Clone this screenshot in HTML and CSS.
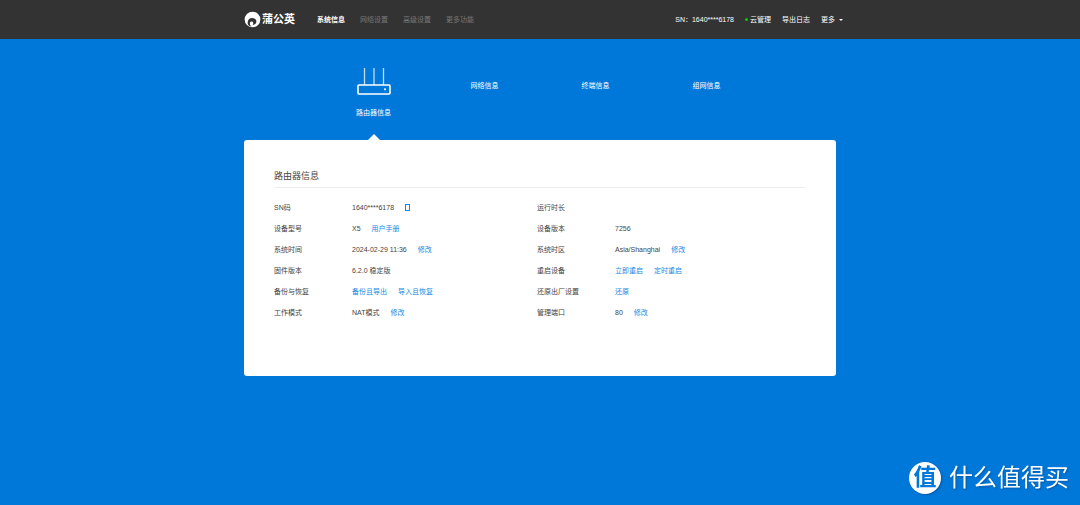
FILE: index.html
```
<!DOCTYPE html>
<html lang="zh-CN">
<head>
<meta charset="utf-8">
<meta name="viewport" content="width=device-width, initial-scale=1">
<title>蒲公英 - 系统信息</title>
<link rel="stylesheet" href="styles.css">
</head>
<body>
<header class="topbar">
  <div class="topbar-inner">
    <a class="brand" href="#">
      <svg class="brand-mark" viewBox="0 0 16 16" aria-hidden="true">
        <circle cx="8" cy="8" r="7.4" fill="#fff"/>
        <path d="M3.6 12.2C2.9 9.2 4.8 6.6 7.6 6.6C10.2 6.6 11.9 8.4 11.6 10.4C11.3 12.3 9.6 13.3 8 13C9 12.2 9 10.8 8 10.2C6.8 9.6 5.5 10.4 5.5 11.8C5.5 13.1 6.2 14 7.2 14.6C5.4 14.7 4 13.7 3.6 12.2Z" fill="#333"/>
      </svg>
      <span>蒲公英</span>
    </a>
    <nav class="main-nav">
      <a class="active" href="#">系统信息</a>
      <a href="#">网络设置</a>
      <a href="#">高级设置</a>
      <a href="#">更多功能</a>
    </nav>
    <div class="tools">
      <span>SN：1640****6178</span>
      <a class="cloud" href="#">云管理</a>
      <a href="#">导出日志</a>
      <button class="more" type="button">更多</button>
    </div>
  </div>
</header>

<main class="page">
  <nav class="tabs">
    <a class="tab current" href="#">
      <svg class="router" viewBox="0 0 34 28" fill="none" stroke="#fff" aria-hidden="true">
        <path d="M7.5 0v17M17 0v17M26.5 0v17" stroke-width="1.3" opacity=".75"/>
        <rect x="1" y="17" width="32" height="9" rx="1" stroke-width="1.6"/>
        <circle cx="28" cy="21.3" r="1" fill="#fff" stroke="none"/>
      </svg>
      <span>路由器信息</span>
    </a>
    <a class="tab" href="#">网络信息</a>
    <a class="tab" href="#">终端信息</a>
    <a class="tab" href="#">组网信息</a>
  </nav>

  <section class="card">
    <h1>路由器信息</h1>
    <div class="columns">
      <dl>
        <div class="row"><dt>SN码</dt><dd>1640****6178 <button class="copy" type="button" aria-label="复制"></button></dd></div>
        <div class="row"><dt>设备型号</dt><dd>X5 <a href="#">用户手册</a></dd></div>
        <div class="row"><dt>系统时间</dt><dd>2024-02-29 11:36 <a href="#">修改</a></dd></div>
        <div class="row"><dt>固件版本</dt><dd>6.2.0 稳定版</dd></div>
        <div class="row"><dt>备份与恢复</dt><dd><a href="#">备份且导出</a><a href="#">导入且恢复</a></dd></div>
        <div class="row"><dt>工作模式</dt><dd>NAT模式 <a href="#">修改</a></dd></div>
      </dl>
      <dl>
        <div class="row"><dt>运行时长</dt><dd></dd></div>
        <div class="row"><dt>设备版本</dt><dd>7256</dd></div>
        <div class="row"><dt>系统时区</dt><dd>Asia/Shanghai <a href="#">修改</a></dd></div>
        <div class="row"><dt>重启设备</dt><dd><a href="#">立即重启</a><a href="#">定时重启</a></dd></div>
        <div class="row"><dt>还原出厂设置</dt><dd><a href="#">还原</a></dd></div>
        <div class="row"><dt>管理端口</dt><dd>80 <a href="#">修改</a></dd></div>
      </dl>
    </div>
  </section>
</main>

<div class="watermark">
  <span class="seal">值</span>
  <span>什么值得买</span>
</div>
</body>
</html>
```

FILE: styles.css
```
* { box-sizing: border-box; }

body {
  margin: 0;
  min-height: 100vh;
  background: #0078d9;
  color: #444;
  font: 7px/21px "Liberation Sans", "Noto Sans CJK SC", sans-serif;
}

a { color: #1488e4; text-decoration: none; }

button {
  padding: 0;
  border: 0;
  background: none;
  color: inherit;
  font: inherit;
  cursor: pointer;
}

.topbar { background: #333; color: #fff; }
.topbar a { color: inherit; }

.topbar-inner {
  display: flex;
  align-items: center;
  max-width: 606px;
  min-height: 39px;
  margin: 0 auto;
  padding-left: 7px;
}

.brand {
  display: flex;
  align-items: center;
  gap: 1px;
  font-size: 11px;
  font-weight: 700;
}
.brand-mark { width: 17px; height: 17px; }

.main-nav { display: flex; gap: 15px; margin-left: 22px; }
.main-nav a { color: #777; }
.main-nav .active { color: #fff; font-weight: 700; }

.tools { display: flex; align-items: center; gap: 11px; margin-left: auto; }
.cloud { display: flex; align-items: center; gap: 2px; }
.cloud::before {
  content: "";
  width: 3px;
  height: 3px;
  border-radius: 50%;
  background: #0c0;
}
.more { display: flex; align-items: center; gap: 4px; }
.more::after {
  content: "";
  border: 2px solid transparent;
  border-top-color: #fff;
  border-bottom-width: 0;
}

.page { max-width: 592px; margin: 0 auto; }

.tabs {
  display: grid;
  grid-template-columns: repeat(4, 1fr);
  min-height: 101px;
  padding: 0 74px;
}
.tab {
  display: flex;
  flex-direction: column;
  align-items: center;
  padding-top: 36px;
  color: #fff;
}
.current { position: relative; padding-top: 29px; gap: 6px; }
.current::after {
  content: "";
  position: absolute;
  bottom: 0;
  border: 6px solid transparent;
  border-bottom-color: #fff;
  border-top-width: 0;
}
.router { width: 34px; height: 28px; }

.card {
  padding: 26px 30px 53px;
  border-radius: 3px;
  background: #fff;
}
.card h1 {
  margin: 0 0 9px;
  border-bottom: 1px solid #eee;
  font-size: 9px;
  font-weight: 400;
}

.columns { display: grid; grid-template-columns: 1fr 1fr; padding-right: 6px; }
.columns dl { margin: 0; }
.row { display: flex; }
.row dt { flex: 0 0 78px; }
.row dd { display: flex; align-items: center; gap: 11px; margin: 0; }

.copy { width: 5px; height: 7px; border: 1px solid #1488e4; }

.watermark {
  position: fixed;
  right: 11px;
  bottom: 10px;
  display: flex;
  align-items: center;
  gap: 8px;
  color: #fff;
  font-size: 24px;
  line-height: 34px;
  text-shadow: 1px 1px 2px #0058a8;
}
.seal {
  width: 32px;
  height: 32px;
  border-radius: 50%;
  background: #fff;
  box-shadow: 1px 1px 2px #0058a8;
  color: #0078d9;
  font-size: 23px;
  font-weight: 700;
  line-height: 31px;
  text-align: center;
  text-shadow: none;
}
```
